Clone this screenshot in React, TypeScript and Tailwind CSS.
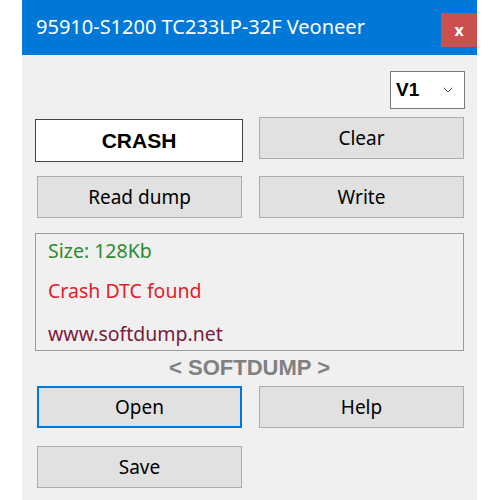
import { ChevronDown } from "lucide-react";

const font = { fontFamily: '"Noto Sans", "Open Sans", sans-serif' };
const boldFont = { fontFamily: '"Liberation Sans", Arial, sans-serif' };

function WinButton({
  label,
  focused,
  className = "",
}: {
  label: string;
  focused?: boolean;
  className?: string;
}) {
  return (
    <button
      className={
        "flex h-[42px] w-[205px] items-center justify-center bg-[#e1e1e1] text-[19px] leading-[24px] text-black " +
        (focused ? "border-2 border-[#0078d7] " : "border border-[#adadad] ") +
        className
      }
    >
      {label}
    </button>
  );
}

export default function App() {
  return (
    <div className="h-[500px] w-[500px] bg-white" style={font}>
      <div className="ml-[22px] flex h-[500px] w-[455px] flex-col bg-[#f0f0f0]">
        {/* title bar */}
        <div className="flex h-[55px] items-start bg-[#0078d7]">
          <span className="flex-1 pl-[14px] pt-[15px] text-[20px] leading-[24px] text-white">
            95910-S1200 TC233LP-32F Veoneer
          </span>
          <div className="mt-[13px] flex h-[34px] w-[36px] items-center justify-center bg-[#c9504f] text-[16px] font-bold text-white">
            x
          </div>
        </div>

        {/* version select */}
        <div className="mr-[12px] mt-[16px] flex justify-end">
          <div className="flex h-[38px] w-[75px] items-center justify-between border border-[#7a7a7a] bg-white pl-[5px] pr-[8px]">
            <span className="text-[19px] font-bold text-black" style={boldFont}>
              V1
            </span>
            <ChevronDown className="h-4 w-4 text-[#555]" strokeWidth={1.5} />
          </div>
        </div>

        <div className="ml-[13px] mt-[10px] grid grid-cols-[208px_205px] gap-x-[16px]">
          <div
            className="flex h-[43px] items-center justify-center border border-[#444] bg-white text-[21px] font-bold text-black"
            style={boldFont}
          >
            CRASH
          </div>
          <WinButton label="Clear" className="-mt-[2px]" />
          <WinButton label="Read dump" className="ml-[2px] mt-[14px]" />
          <WinButton label="Write" className="mt-[14px]" />
        </div>

        {/* info box */}
        <div className="ml-[13px] mt-[15px] flex h-[118px] w-[429px] flex-col border border-[#9a9a9a] pl-[12px] text-[19.5px]">
          <span className="mt-[4px] leading-[26px] text-[#2e8b2e]">Size: 128Kb</span>
          <span className="mt-[14px] leading-[26px] text-[#e0202c]">Crash DTC found</span>
          <span className="mt-[17px] leading-[26px] text-[#7a1c3c]">www.softdump.net</span>
        </div>

        <div
          className="mt-[4px] text-center text-[22px] font-bold leading-[26px] text-[#808080]"
          style={boldFont}
        >
          &lt; SOFTDUMP &gt;
        </div>

        <div className="ml-[15px] mt-[5px] grid grid-cols-[205px_205px] gap-x-[17px] gap-y-[18px]">
          <WinButton label="Open" focused />
          <WinButton label="Help" />
          <WinButton label="Save" />
        </div>
      </div>
    </div>
  );
}
